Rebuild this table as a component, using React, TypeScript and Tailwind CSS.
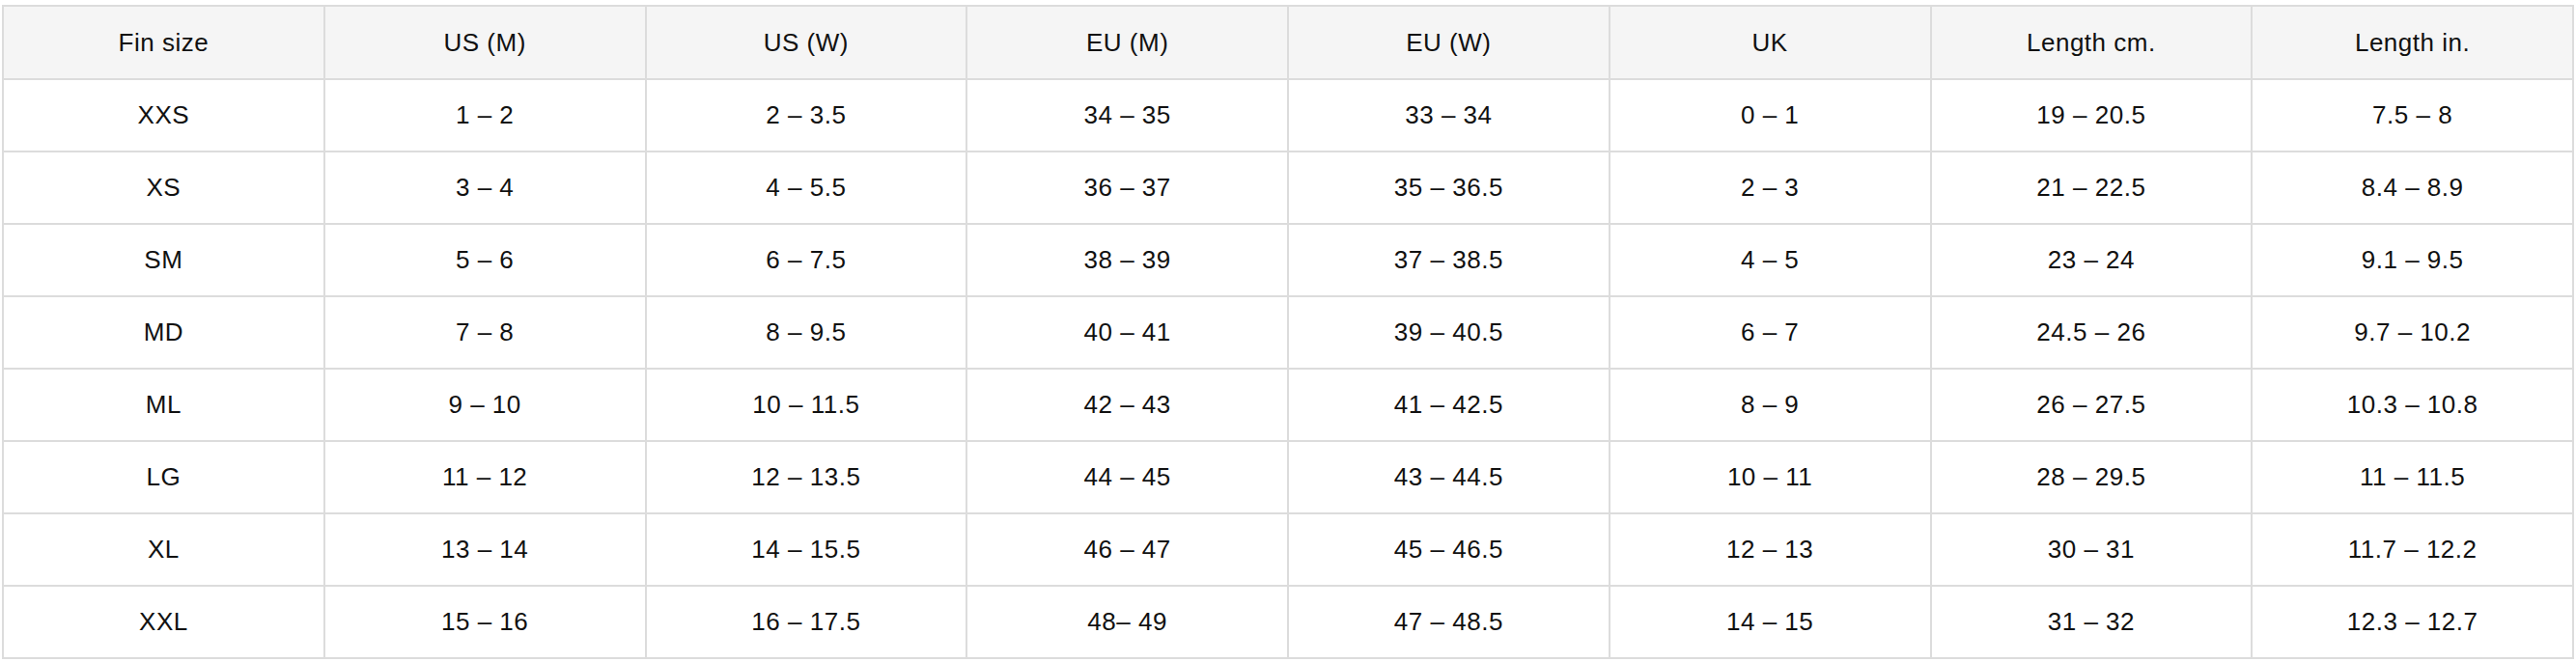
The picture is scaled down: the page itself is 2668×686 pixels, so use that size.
const headers = ["Fin size", "US (M)", "US (W)", "EU (M)", "EU (W)", "UK", "Length cm.", "Length in."];

const rows = [
  ["XXS", "1 – 2", "2 – 3.5", "34 – 35", "33 – 34", "0 – 1", "19 – 20.5", "7.5 – 8"],
  ["XS", "3 – 4", "4 – 5.5", "36 – 37", "35 – 36.5", "2 – 3", "21 – 22.5", "8.4 – 8.9"],
  ["SM", "5 – 6", "6 – 7.5", "38 – 39", "37 – 38.5", "4 – 5", "23 – 24", "9.1 – 9.5"],
  ["MD", "7 – 8", "8 – 9.5", "40 – 41", "39 – 40.5", "6 – 7", "24.5 – 26", "9.7 – 10.2"],
  ["ML", "9 – 10", "10 – 11.5", "42 – 43", "41 – 42.5", "8 – 9", "26 – 27.5", "10.3 – 10.8"],
  ["LG", "11 – 12", "12 – 13.5", "44 – 45", "43 – 44.5", "10 – 11", "28 – 29.5", "11 – 11.5"],
  ["XL", "13 – 14", "14 – 15.5", "46 – 47", "45 – 46.5", "12 – 13", "30 – 31", "11.7 – 12.2"],
  ["XXL", "15 – 16", "16 – 17.5", "48– 49", "47 – 48.5", "14 – 15", "31 – 32", "12.3 – 12.7"],
];

export default function App() {
  return (
    <div className="bg-white px-[2px] pt-[5px] font-['Liberation_Sans',Arial,sans-serif] text-[26px] tracking-[0.02em] text-[#111]">
      <table className="w-full table-fixed border-collapse border-2 border-[#dcdcdc]">
        <thead>
          <tr className="bg-[#f5f5f5]">
            {headers.map((h) => (
              <th key={h} className="h-[76px] border-2 border-[#dcdcdc] text-center font-normal">{h}</th>
            ))}
          </tr>
        </thead>
        <tbody>
          {rows.map((r) => (
            <tr key={r[0]}>
              {r.map((c, i) => (
                <td key={i} className="h-[75px] border-2 border-[#dcdcdc] text-center">{c}</td>
              ))}
            </tr>
          ))}
        </tbody>
      </table>
    </div>
  );
}
